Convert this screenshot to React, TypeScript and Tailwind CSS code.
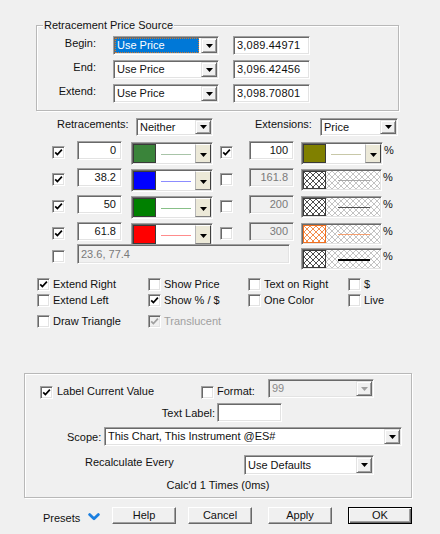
import React from 'react';

const sunken =
  'border border-t-[#a0a0a0] border-l-[#a0a0a0] border-b-white border-r-white shadow-[inset_1px_1px_0_#696969,inset_-1px_-1px_0_#e3e3e3]';
const raised =
  'border border-t-[#e3e3e3] border-l-[#e3e3e3] border-b-[#696969] border-r-[#696969] shadow-[inset_1px_1px_0_#fff,inset_-1px_-1px_0_#a0a0a0]';

function Arrow({ color = '#000' }: { color?: string }) {
  return (
    <svg width="7" height="4" viewBox="0 0 7 4">
      <path d="M0 0H7L3.5 4Z" fill={color} />
    </svg>
  );
}

function CheckBox({ checked, disabled }: { checked?: boolean; disabled?: boolean }) {
  return (
    <span
      className={`flex h-[13px] w-[13px] shrink-0 items-center justify-center ${sunken} ${
        disabled ? 'bg-[#f0f0f0]' : 'bg-white'
      }`}
    >
      {checked && (
        <svg width="9" height="9" viewBox="0 0 9 9">
          <path
            d="M1.2 4.3 L3.4 6.6 L7.9 1.6"
            fill="none"
            stroke={disabled ? '#a0a0a0' : '#000'}
            strokeWidth="1.7"
          />
        </svg>
      )}
    </span>
  );
}

function DropBtn({ disabled }: { disabled?: boolean }) {
  return (
    <span className={`m-[1px] flex w-[16px] shrink-0 items-center justify-center bg-[#f0f0f0] ${raised}`}>
      <Arrow color={disabled ? '#a0a0a0' : '#000'} />
    </span>
  );
}

function Select({
  value,
  className,
  focused,
  disabled,
}: {
  value: string;
  className: string;
  focused?: boolean;
  disabled?: boolean;
}) {
  return (
    <div className={`flex shrink-0 ${sunken} ${disabled ? 'bg-[#f0f0f0]' : 'bg-white'} ${className}`}>
      {focused ? (
        <span className="m-[1px] flex flex-1 items-center border border-dotted border-[#d0782e] bg-[#0078d7] pl-[1px] text-white">
          {value}
        </span>
      ) : (
        <span className={`flex flex-1 items-center pl-[3px] ${disabled ? 'text-[#8a8a8a]' : ''}`}>{value}</span>
      )}
      <DropBtn disabled={disabled} />
    </div>
  );
}

function TextBox({
  value,
  className,
  disabled,
  right,
}: {
  value: string;
  className: string;
  disabled?: boolean;
  right?: boolean;
}) {
  return (
    <div
      className={`flex shrink-0 items-center ${sunken} ${className} ${
        disabled ? 'bg-[#f0f0f0] text-[#7a7a7a]' : 'bg-white'
      } ${right ? 'justify-end pr-[5px]' : 'pl-[3px]'}`}
    >
      {value}
    </div>
  );
}

function ColorCombo({ swatch, line }: { swatch: string; line: string }) {
  return (
    <div className={`flex h-[23px] w-[82px] shrink-0 bg-white p-[1px] ${sunken}`}>
      <span className={`w-[23px] border border-[#3a3a3a] ${swatch}`} />
      <span className="flex flex-1 items-center justify-center pt-[2px]">
        <span className={`h-[1px] w-[30px] ${line}`} />
      </span>
      <span className="flex w-[16px] items-center justify-center border border-t-white border-l-[#b8b8b8] border-b-[#808080] border-r-[#404040] bg-[#ece9d8] pt-[3px]">
        <Arrow />
      </span>
    </div>
  );
}

function Hatch({ id, color }: { id: string; color: string }) {
  return (
    <svg className="block h-full w-full">
      <defs>
        <pattern id={id} width="6" height="6" patternUnits="userSpaceOnUse">
          <path d="M0 0L6 6M6 0L0 6" stroke={color} strokeWidth="0.8" />
        </pattern>
      </defs>
      <rect width="100%" height="100%" fill="#fff" />
      <rect width="100%" height="100%" fill={`url(#${id})`} />
    </svg>
  );
}

function HatchCombo({
  id,
  dot,
  border,
  line,
}: {
  id: string;
  dot: string;
  border: string;
  line: string;
}) {
  return (
    <div className={`flex h-[22px] w-[81px] shrink-0 p-[1px] ${sunken}`}>
      <span className={`w-[23px] border ${border}`}>
        <Hatch id={`${id}-s`} color={dot} />
      </span>
      <span className="relative flex-1">
        <Hatch id={`${id}-l`} color="#b4b4b4" />
        <span className={`absolute left-[12px] top-[9px] w-[32px] ${line}`} />
      </span>
    </div>
  );
}

const retr = [
  { v: '0', swatch: 'bg-[#3a843a]', line: 'bg-[#a8c4a8]', h: 'h-[27px]' },
  { v: '38.2', swatch: 'bg-[#0000ff]', line: 'bg-[#8c8cff]', h: 'h-[27px]' },
  { v: '50', swatch: 'bg-[#008000]', line: 'bg-[#88c088]', h: 'h-[27px]' },
  { v: '61.8', swatch: 'bg-[#ff0000]', line: 'bg-[#ff8c8c]', h: 'h-[22px]' },
];

const ext = [
  { v: '100' },
  { v: '161.8', id: 'h1', dot: '#222', border: 'border-[#3a3a3a]', line: 'h-[1px] bg-[#a8a8a8]' },
  { v: '200', id: 'h2', dot: '#222', border: 'border-[#3a3a3a]', line: 'h-[1px] bg-[#505050]' },
  { v: '300', id: 'h3', dot: '#f07020', border: 'border-[#f07020]', line: 'h-[1px] bg-[#f4a070]' },
];

function Opt({ label, checked, disabled, w }: { label: string; checked?: boolean; disabled?: boolean; w: string }) {
  return (
    <div className={`flex items-start gap-[3px] ${w}`}>
      <CheckBox checked={checked} disabled={disabled} />
      <span className={disabled ? 'text-[#a0a0a0]' : ''}>{label}</span>
    </div>
  );
}

function Btn({ label, def }: { label: string; def?: boolean }) {
  return (
    <div
      className={`flex h-[17px] w-[64px] shrink-0 items-center justify-center bg-[#f0f0f0] ${
        def
          ? 'border border-black shadow-[inset_1px_1px_0_#fff,inset_-1px_-1px_0_#696969,inset_-2px_-2px_0_#a0a0a0]'
          : 'border border-t-white border-l-white border-b-[#696969] border-r-[#696969] shadow-[inset_-1px_-1px_0_#a0a0a0]'
      }`}
    >
      {label}
    </div>
  );
}

export default function App() {
  return (
    <div className="flex h-[534px] w-[440px] flex-col overflow-hidden bg-[#f0f0f0] font-['Liberation_Sans',Arial,sans-serif] text-[11px] leading-[13px] text-[#111]">
      {/* Retracement Price Source */}
      <div className="relative ml-[36px] mt-[25px] flex h-[86px] w-[363px] flex-col gap-[5px] border border-[#b8b8b8] pt-[10px] shadow-[inset_1px_1px_0_#fff,1px_1px_0_#fff]">
        <span className="absolute left-[6px] top-[-7px] bg-[#f0f0f0] px-[1px]">Retracement Price Source</span>
        {[
          { l: 'Begin:', v: '3,089.44971', f: true },
          { l: 'End:', v: '3,096.42456' },
          { l: 'Extend:', v: '3,098.70801' },
        ].map((r) => (
          <div key={r.l} className="flex h-[19px] items-start">
            <span className="w-[59px] pt-[1px] text-right">{r.l}</span>
            <Select value="Use Price" focused={r.f} className="ml-[17px] h-[19px] w-[106px]" />
            <TextBox value={r.v} className="ml-[14px] h-[19px] w-[77px] tracking-[0.2px]" />
          </div>
        ))}
      </div>

      {/* headings */}
      <div className="mt-[7px] flex h-[18px] items-start pl-[57px]">
        <span className="w-[79px]">Retracements:</span>
        <Select value="Neither" className="h-[18px] w-[77px]" />
        <span className="ml-[42px] w-[65px]">Extensions:</span>
        <Select value="Price" className="h-[18px] w-[78px]" />
      </div>

      {/* levels */}
      <div className="mt-[5px] flex flex-col">
        {retr.map((r, i) => {
          const e = ext[i];
          return (
            <div key={r.v} className={`flex items-start ${r.h}`}>
              <span className="ml-[52px] mt-[5px]">
                <CheckBox checked />
              </span>
              <TextBox value={r.v} right className="ml-[12px] h-[19px] w-[45px]" />
              <span className="ml-[9px] mt-[1px]">
                <ColorCombo swatch={r.swatch} line={r.line} />
              </span>
              <span className="ml-[7px] mt-[5px]">
                <CheckBox checked={i === 0} />
              </span>
              <TextBox value={e.v} right disabled={i > 0} className="ml-[16px] h-[19px] w-[45px]" />
              <span className="ml-[7px] mt-[1px]">
                {i === 0 ? (
                  <ColorCombo swatch="bg-[#808000]" line="bg-[#c8c8a8]" />
                ) : (
                  <HatchCombo id={e.id!} dot={e.dot!} border={e.border!} line={e.line!} />
                )}
              </span>
              <span className="ml-[1px] mt-[3px]">%</span>
            </div>
          );
        })}
        <div className="flex h-[25px] items-start">
          <span className="ml-[52px] mt-[6px]">
            <CheckBox />
          </span>
          <TextBox value="23.6, 77.4" disabled className="ml-[12px] h-[20px] w-[213px]" />
          <span className="ml-[11px] mt-[4px]">
            <HatchCombo id="h4" dot="#222" border="border-[#3a3a3a]" line="h-[2px] bg-black" />
          </span>
          <span className="ml-[1px] mt-[6px]">%</span>
        </div>
      </div>

      {/* options */}
      <div className="mt-[9px] flex flex-col pl-[37px]">
        <div className="flex h-[16px] items-start">
          <Opt w="w-[111px]" label="Extend Right" checked />
          <Opt w="w-[100px]" label="Show Price" />
          <Opt w="w-[100px]" label="Text on Right" />
          <Opt w="w-[60px]" label="$" />
        </div>
        <div className="flex h-[21px] items-start">
          <Opt w="w-[111px]" label="Extend Left" />
          <Opt w="w-[100px]" label="Show % / $" checked />
          <Opt w="w-[100px]" label="One Color" />
          <Opt w="w-[60px]" label="Live" />
        </div>
        <div className="flex h-[13px] items-start">
          <Opt w="w-[111px]" label="Draw Triangle" />
          <Opt w="w-[100px]" label="Translucent" checked disabled />
        </div>
      </div>

      {/* label group */}
      <div className="ml-[24px] mt-[45px] flex h-[125px] w-[388px] flex-col border border-[#b8b8b8] shadow-[inset_1px_1px_0_#fff,1px_1px_0_#fff]">
        <div className="mt-[5px] flex h-[19px] items-start">
          <div className="ml-[15px] flex w-[161px] items-start">
            <span className="mt-[7px]">
              <CheckBox checked />
            </span>
            <span className="ml-[4px] mt-[6px]">Label Current Value</span>
          </div>
          <span className="mt-[7px]">
            <CheckBox />
          </span>
          <span className="ml-[3px] mt-[6px] w-[51px]">Format:</span>
          <Select value="99" disabled className="h-[19px] w-[106px]" />
        </div>
        <div className="mt-[5px] flex h-[19px] items-start">
          <span className="w-[190px] pt-[4px] text-right">Text Label:</span>
          <TextBox value="" className="ml-[2px] h-[19px] w-[65px]" />
        </div>
        <div className="mt-[5px] flex h-[19px] items-start pl-[42px]">
          <span className="w-[37px] pt-[4px]">Scope:</span>
          <Select value="This Chart, This Instrument @ES#" className="h-[19px] w-[298px]" />
        </div>
        <div className="mt-[9px] flex h-[20px] items-start pl-[60px]">
          <span className="w-[159px] pt-[1px]">Recalculate Every</span>
          <Select value="Use Defaults" className="h-[20px] w-[130px]" />
        </div>
        <div className="mt-[4px] text-center">Calc'd 1 Times (0ms)</div>
      </div>

      {/* footer */}
      <div className="mt-[9px] flex h-[17px] items-start pl-[43px]">
        <span className="mt-[5px] w-[45px]">Presets</span>
        <svg className="mt-[6px]" width="12" height="8" viewBox="0 0 12 8">
          <path d="M1.6 1.6 L6 5.8 L10.4 1.6" fill="none" stroke="#1a7fe0" strokeWidth="2.8" strokeLinecap="round" strokeLinejoin="round" />
        </svg>
        <div className="ml-[12px]">
          <Btn label="Help" />
        </div>
        <div className="ml-[12px]">
          <Btn label="Cancel" />
        </div>
        <div className="ml-[16px]">
          <Btn label="Apply" />
        </div>
        <div className="ml-[16px]">
          <Btn label="OK" def />
        </div>
      </div>
    </div>
  );
}
